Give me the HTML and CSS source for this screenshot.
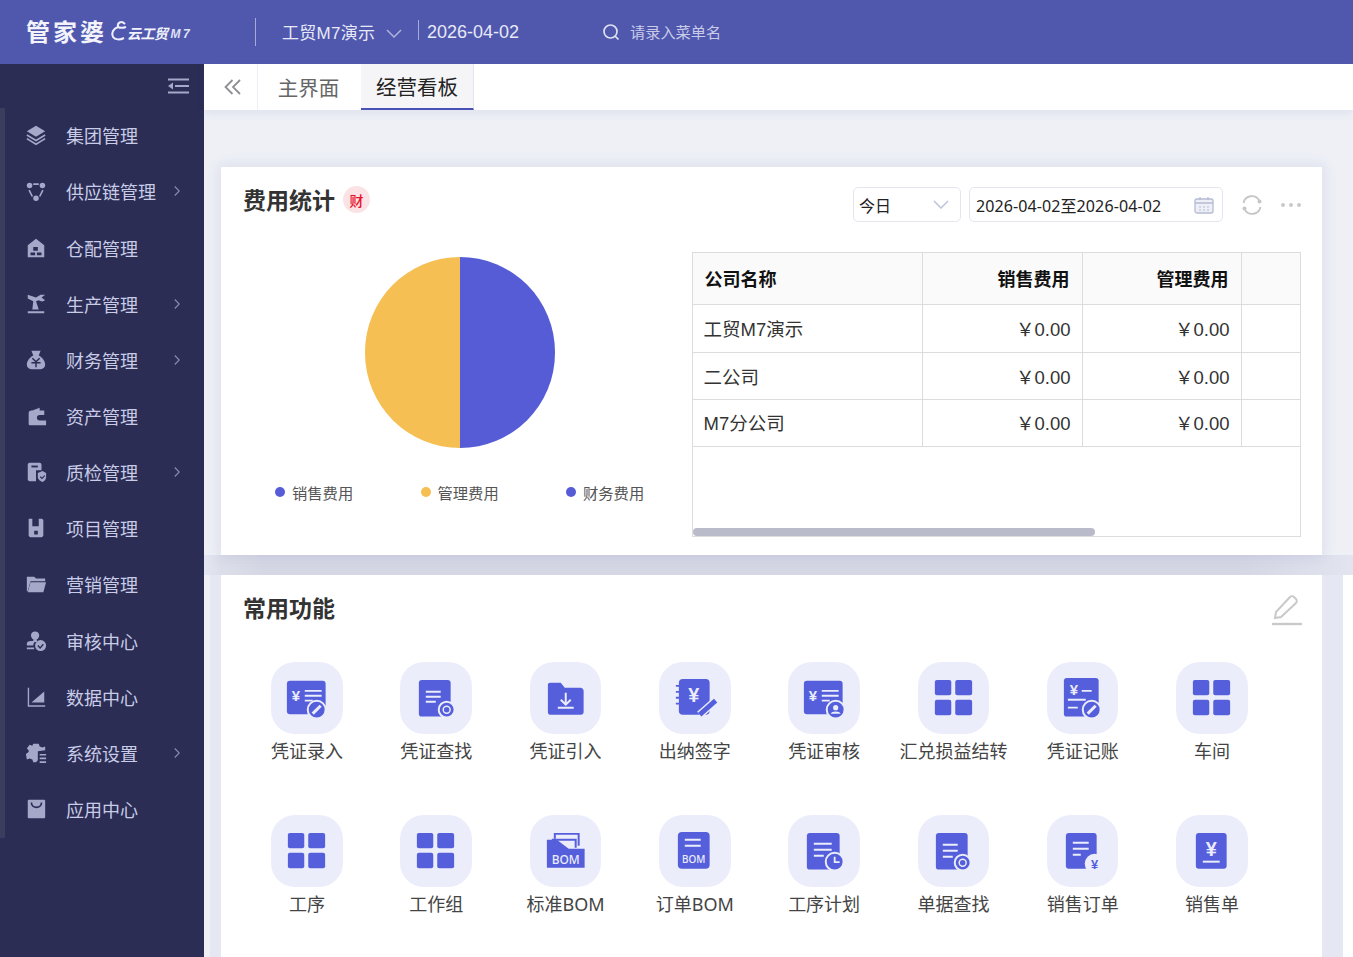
FILE: index.html
```html
<!DOCTYPE html>
<html lang="zh-CN">
<head>
<meta charset="utf-8">
<title>经营看板</title>
<link rel="stylesheet" href="styles.css">
</head>
<body>
<svg class="defs" width="0" height="0">
  <defs>
    <symbol id="t-grid" viewBox="0 0 72 72"><g fill="#565fdb"><rect x="17" y="18" width="16.500" height="15.500" rx="2"/><rect x="37.500" y="18" width="17" height="15.500" rx="2"/><rect x="17" y="38" width="16.500" height="15.500" rx="2"/><rect x="37.500" y="38" width="17" height="15.500" rx="2"/></g></symbol>
    <symbol id="t-voucher" viewBox="0 0 72 72"><rect x="16" y="19" width="39" height="33.500" rx="3" fill="#565fdb"/><text x="25" y="39" class="ty" font-size="15">¥</text><path d="M34 29h17M34 34h17M34 39h8" stroke="#ebedfb" stroke-width="1.800" fill="none"/></symbol>
    <symbol id="t-doc" viewBox="0 0 72 72"><rect x="19" y="18" width="33" height="37" rx="3" fill="#565fdb"/><path d="M26 29h18M26 35h18M26 41h10" stroke="#ebedfb" stroke-width="2" fill="none"/></symbol>
  </defs>
</svg>
<div class="app">
  <header class="topbar">
    <div class="logo">
      <span class="logo-main">管家婆</span>
      <svg class="logo-swirl" width="18" height="24" viewBox="0 0 18 24"><path d="M15 5C11 1 7 4 8 8 3 10 1 14 3 18c2 3 7 3 11 1M8 8c2 1 5 1 8 0" fill="none" stroke="#eef" stroke-width="2"/></svg>
      <span class="logo-sub">云工贸</span>
      <span class="logo-m7">M7</span>
    </div>
    <span class="bar-div tall"></span>
    <span class="company">工贸M7演示</span>
    <svg class="company-arrow" width="16" height="9" viewBox="0 0 16 9"><path d="M1 1l7 7 7-7" fill="none" stroke="#aeb2dc" stroke-width="1.500"/></svg>
    <span class="bar-div short"></span>
    <span class="bar-date">2026-04-02</span>
    <svg class="search-ic" width="18" height="18" viewBox="0 0 18 18"><circle cx="8.500" cy="8.500" r="6.500" fill="none" stroke="#dfe1f3" stroke-width="1.700"/><path d="M13 13l3.500 3.500" stroke="#dfe1f3" stroke-width="1.700"/></svg>
    <span class="search-ph">请录入菜单名</span>
  </header>
  <div class="body">
    <aside class="sidebar">
      <div class="side-toggle">
        <svg width="22" height="16" viewBox="0 0 22 16"><path d="M1 1.500h21M8 8h14M1 14.500h21" stroke="#a5a8c8" stroke-width="2"/><path d="M6 4.500v7L1 8z" fill="#a5a8c8"/></svg>
      </div>
      <nav class="side-list">
        <a class="side-item"><svg class="side-ic" viewBox="0 0 24 24"><path d="M12 2l10 6-10 6L2 8z"/><path d="M2 12l10 6 10-6M2 16l10 6 10-6" fill="none" stroke="#a5a8c8" stroke-width="1.800"/></svg><span>集团管理</span></a>
        <a class="side-item"><svg class="side-ic" viewBox="0 0 24 24"><circle cx="5" cy="6" r="3"/><circle cx="19" cy="6" r="3"/><circle cx="12" cy="20" r="3"/><path d="M9 4.500h6M4.500 11l3.500 7M19.500 11l-3.500 7" stroke="#a5a8c8" stroke-width="1.800" fill="none"/></svg><span>供应链管理</span><svg class="chev" viewBox="0 0 8 14"><path d="M1 1l6 6-6 6"/></svg></a>
        <a class="side-item"><svg class="side-ic" viewBox="0 0 24 24"><path fill-rule="evenodd" d="M12 2l9 7v13H3V9zM9 11h5v4H9zM6 17h5v3H6zM13 17h5v3h-5z"/></svg><span>仓配管理</span></a>
        <a class="side-item"><svg class="side-ic" viewBox="0 0 24 24"><path d="M3 2l9 3 5-3h5l-4 3 4 3c-3 2-5 1-7 0l-3 1 3 9H8l1-9-6-3zM3 20h18v2H3z"/></svg><span>生产管理</span><svg class="chev" viewBox="0 0 8 14"><path d="M1 1l6 6-6 6"/></svg></a>
        <a class="side-item"><svg class="side-ic" viewBox="0 0 24 24"><path d="M7 2h10l-2 5c4 2 7 6 7 10 0 3-2 5-5 5H7c-3 0-5-2-5-5 0-4 3-8 7-10z"/><path d="M8 10l4 4 4-4M7 15h10M12 14v6" stroke="#2b2d55" stroke-width="1.600" fill="none"/></svg><span>财务管理</span><svg class="chev" viewBox="0 0 8 14"><path d="M1 1l6 6-6 6"/></svg></a>
        <a class="side-item"><svg class="side-ic" viewBox="0 0 24 24"><path d="M16 3v3H8zM4 9c0-2 1-3 3-3h14v5h-5a3 3 0 000 6h7v5H5c-1 0-1-1-1-2z"/></svg><span>资产管理</span></a>
        <a class="side-item"><svg class="side-ic" viewBox="0 0 24 24"><path d="M5 2h11c1 0 2 1 2 2v6h-6v12H5c-1 0-2-1-2-2V4c0-1 1-2 2-2z"/><path d="M7 6h7" stroke="#2b2d55" stroke-width="2"/><path d="M14 13l5-2 4 2v5c0 2-2 4-4 5-2-1-5-3-5-5z"/><path d="M16.500 17l2 2 3-3" stroke="#2b2d55" stroke-width="1.300" fill="none"/></svg><span>质检管理</span><svg class="chev" viewBox="0 0 8 14"><path d="M1 1l6 6-6 6"/></svg></a>
        <a class="side-item"><svg class="side-ic" viewBox="0 0 24 24"><path fill-rule="evenodd" d="M5 2h3v8h7V2h3c1 0 2 1 2 2v16c0 1-1 2-2 2H6c-1 0-2-1-2-2V3c0-1 0-1 1-1zM10 15h4v4h-4z"/></svg><span>项目管理</span></a>
        <a class="side-item"><svg class="side-ic" viewBox="0 0 24 24"><path d="M2 4h8l2 2h10v3H6L3 20H2z"/><path d="M6 10h17l-3 11H3z"/></svg><span>营销管理</span></a>
        <a class="side-item"><svg class="side-ic" viewBox="0 0 24 24"><circle cx="11" cy="6" r="4.500"/><path d="M9 10h4v3H9zM2 15c0-2 2-3 4-3h6c-2 1-3 3-3 5H2zM2 19h8v2H2z"/><circle cx="17" cy="17" r="6"/><path d="M14 17l2.500 2.500 3.500-4" stroke="#2b2d55" stroke-width="1.500" fill="none"/></svg><span>审核中心</span></a>
        <a class="side-item"><svg class="side-ic" viewBox="0 0 24 24"><path d="M3 2h1.500v19H22v1.500H3z"/><path d="M7 18L21 6v12z"/></svg><span>数据中心</span></a>
        <a class="side-item"><svg class="side-ic" viewBox="0 0 24 24"><path d="M9 2h6l1 3 3 1 3-1v4l-8 1v10l-2 2H9l-1-3-3-1-3 1-1-6 3-2V9L2 7l3-4 3 1z"/><path d="M16 13h7v1.800h-7zM16 17h7v1.800h-7zM16 21h7v1.800h-7z"/></svg><span>系统设置</span><svg class="chev" viewBox="0 0 8 14"><path d="M1 1l6 6-6 6"/></svg></a>
        <a class="side-item"><svg class="side-ic" viewBox="0 0 24 24"><path d="M4 2h17c1 0 1 1 1 1v18c0 1-1 1-1 1H4c-1 0-1-1-1-1V3s0-1 1-1z"/><path d="M7 5c0 7 11 7 11 0" fill="none" stroke="#2b2d55" stroke-width="1.800"/></svg><span>应用中心</span></a>
      </nav>
    </aside>
    <main class="main">
      <div class="tabs">
        <div class="tab-back"><svg width="18" height="16" viewBox="0 0 18 16"><path d="M8.500 1l-7 7 7 7M16 1L9 8l7 7" fill="none" stroke="#8e8e94" stroke-width="1.800"/></svg></div>
        <div class="tab">主界面</div>
        <div class="tab active">经营看板</div>
      </div>
      <section class="upper">
        <div class="card stats">
          <div class="stats-head">
            <h2 class="card-title">费用统计</h2>
            <span class="badge">财</span>
            <div class="head-tools">
              <div class="field sel"><span>今日</span><svg width="16" height="9" viewBox="0 0 16 9"><path d="M1 1l7 7 7-7" fill="none" stroke="#bfc3da" stroke-width="1.500"/></svg></div>
              <div class="field dater"><span>2026-04-02至2026-04-02</span><svg width="20" height="18" viewBox="0 0 20 18"><rect x="1" y="3" width="18" height="14" rx="2" fill="#eef0f8" stroke="#b5bad3" stroke-width="1.300"/><path d="M1 7h18M6 1v3M14 1v3" stroke="#b5bad3" stroke-width="1.300"/><path d="M5 11h2M9 11h2M13 11h2M5 14h2M9 14h2M13 14h2" stroke="#b5bad3"/></svg></div>
              <svg class="refresh" width="22" height="22" viewBox="0 0 22 22"><path d="M2.500 9A8.500 8.500 0 0118 6M19.500 13A8.500 8.500 0 014 16" fill="none" stroke="#c6c6c8" stroke-width="1.800"/><circle cx="18.500" cy="7.500" r="2" fill="#c6c6c8"/><circle cx="3.500" cy="14.500" r="2" fill="#c6c6c8"/></svg>
              <span class="more"><i></i><i></i><i></i></span>
            </div>
          </div>
          <div class="stats-body">
            <div class="chart">
              <div class="pie"></div>
              <div class="legend">
                <span class="leg"><i class="dot blue"></i>销售费用</span>
                <span class="leg"><i class="dot gold"></i>管理费用</span>
                <span class="leg"><i class="dot blue"></i>财务费用</span>
              </div>
            </div>
            <div class="table-box">
              <table class="grid-table">
                <colgroup><col class="c1"><col class="c2"><col class="c3"><col class="c4"></colgroup>
                <thead><tr><th class="left">公司名称</th><th>销售费用</th><th>管理费用</th><th></th></tr></thead>
                <tbody>
                  <tr class="r1"><td class="left">工贸M7演示</td><td>￥0.00</td><td>￥0.00</td><td></td></tr>
                  <tr class="r2"><td class="left">二公司</td><td>￥0.00</td><td>￥0.00</td><td></td></tr>
                  <tr class="r3"><td class="left">M7分公司</td><td>￥0.00</td><td>￥0.00</td><td></td></tr>
                </tbody>
              </table>
              <div class="scroll-track"><div class="scroll-thumb"></div></div>
            </div>
          </div>
        </div>
      </section>
      <section class="lower">
        <div class="card funcs">
          <div class="funcs-head">
            <h2 class="card-title">常用功能</h2>
            <svg class="edit-ic" width="32" height="32" viewBox="0 0 32 32"><path d="M4 24l1-6L19 3c1-1 3-1 4 0l2 2c1 1 1 3 0 4L10 23z" fill="none" stroke="#c9c9cb" stroke-width="2"/><path d="M1 30h30" stroke="#c9c9cb" stroke-width="2.400"/></svg>
          </div>
          <div class="func-grid">
            <div class="func"><span class="tile"><svg viewBox="0 0 72 72"><use href="#t-voucher"/><circle cx="46" cy="48" r="9" fill="#565fdb" stroke="#ebedfb" stroke-width="2"/><path d="M42 52l8-8" stroke="#ebedfb" stroke-width="3"/></svg></span><span class="func-name">凭证录入</span></div>
            <div class="func"><span class="tile"><svg viewBox="0 0 72 72"><rect x="19" y="18" width="32" height="37" rx="3" fill="#565fdb"/><path d="M26 30h15M26 35h15M26 40h10" stroke="#ebedfb" stroke-width="2" fill="none"/><circle cx="47" cy="48" r="8" fill="#565fdb" stroke="#ebedfb" stroke-width="2"/><circle cx="47" cy="48" r="3.500" fill="none" stroke="#ebedfb" stroke-width="1.500"/></svg></span><span class="func-name">凭证查找</span></div>
            <div class="func"><span class="tile"><svg viewBox="0 0 72 72"><path d="M18 23c0-1 1-2 2-2h11l4 5h16c1 0 3 1 3 3v21c0 2-1 3-3 3H20c-1 0-2-1-2-3z" fill="#565fdb"/><path d="M36 31v11M31 38l5 5 5-5M28 46h16" stroke="#ebedfb" stroke-width="2" fill="none"/></svg></span><span class="func-name">凭证引入</span></div>
            <div class="func"><span class="tile"><svg viewBox="0 0 72 72"><rect x="20" y="17" width="31" height="36" rx="4" fill="#565fdb"/><path d="M17 24h5M17 30h5M17 36h5M17 42h5" stroke="#565fdb" stroke-width="1.800"/><text x="35" y="40" class="ty" font-size="20">¥</text><path d="M41 53l16-14" stroke="#ebedfb" stroke-width="8"/><path d="M41 53l16-14" stroke="#565fdb" stroke-width="5"/></svg></span><span class="func-name">出纳签字</span></div>
            <div class="func"><span class="tile"><svg viewBox="0 0 72 72"><use href="#t-voucher"/><circle cx="48" cy="48" r="9" fill="#565fdb" stroke="#ebedfb" stroke-width="2"/><circle cx="48" cy="46" r="2.600" fill="#ebedfb"/><path d="M43 52c1-3 9-3 10 0z" fill="#ebedfb"/></svg></span><span class="func-name">凭证审核</span></div>
            <div class="func"><span class="tile"><svg viewBox="0 0 72 72"><use href="#t-grid"/></svg></span><span class="func-name">汇兑损益结转</span></div>
            <div class="func"><span class="tile"><svg viewBox="0 0 72 72"><rect x="17" y="16" width="35" height="39" rx="3" fill="#565fdb"/><text x="27" y="33" class="ty" font-size="15">¥</text><path d="M35 29h10M21 38h18M21 46h10" stroke="#ebedfb" stroke-width="1.800"/><circle cx="45" cy="48" r="9" fill="#565fdb" stroke="#ebedfb" stroke-width="2"/><path d="M41 52l8-8" stroke="#ebedfb" stroke-width="3"/></svg></span><span class="func-name">凭证记账</span></div>
            <div class="func"><span class="tile"><svg viewBox="0 0 72 72"><use href="#t-grid"/></svg></span><span class="func-name">车间</span></div>
            <div class="func"><span class="tile"><svg viewBox="0 0 72 72"><use href="#t-grid"/></svg></span><span class="func-name">工序</span></div>
            <div class="func"><span class="tile"><svg viewBox="0 0 72 72"><use href="#t-grid"/></svg></span><span class="func-name">工作组</span></div>
            <div class="func"><span class="tile"><svg viewBox="0 0 72 72"><path d="M25 24v-5h24v12" fill="none" stroke="#565fdb" stroke-width="2"/><path d="M22 25h24v8" fill="#ebedfb" stroke="#565fdb" stroke-width="2"/><path d="M17 25h10l12 9h16v19H17z" fill="#565fdb"/><text x="36" y="49" class="tb" font-size="12">BOM</text></svg></span><span class="func-name">标准BOM</span></div>
            <div class="func"><span class="tile"><svg viewBox="0 0 72 72"><rect x="19" y="17" width="32" height="37" rx="4" fill="#565fdb"/><path d="M26 25h16M26 31h16" stroke="#ebedfb" stroke-width="2"/><text x="35" y="48" class="tb" font-size="10">BOM</text></svg></span><span class="func-name">订单BOM</span></div>
            <div class="func"><span class="tile"><svg viewBox="0 0 72 72"><use href="#t-doc"/><circle cx="47" cy="47" r="9" fill="#565fdb" stroke="#ebedfb" stroke-width="2"/><path d="M47 42v5.500h5" fill="none" stroke="#ebedfb" stroke-width="1.800"/></svg></span><span class="func-name">工序计划</span></div>
            <div class="func"><span class="tile"><svg viewBox="0 0 72 72"><rect x="18" y="18" width="32" height="37" rx="3" fill="#565fdb"/><path d="M25 30h15M25 36h15M25 42h10" stroke="#ebedfb" stroke-width="2" fill="none"/><circle cx="45" cy="48" r="8" fill="#565fdb" stroke="#ebedfb" stroke-width="2"/><circle cx="45" cy="48" r="3.500" fill="none" stroke="#ebedfb" stroke-width="1.500"/></svg></span><span class="func-name">单据查找</span></div>
            <div class="func"><span class="tile"><svg viewBox="0 0 72 72"><rect x="19" y="18" width="31" height="36" rx="3" fill="#565fdb"/><path d="M26 28h16M26 34h16M26 40h8" stroke="#ebedfb" stroke-width="2"/><circle cx="48" cy="49" r="10" fill="#ebedfb"/><text x="48" y="54" class="ty2" font-size="13">¥</text></svg></span><span class="func-name">销售订单</span></div>
            <div class="func"><span class="tile"><svg viewBox="0 0 72 72"><rect x="20" y="18" width="31" height="36" rx="3" fill="#565fdb"/><text x="35.500" y="41" class="ty" font-size="20">¥</text><path d="M27 47h17" stroke="#ebedfb" stroke-width="2"/></svg></span><span class="func-name">销售单</span></div>
          </div>
        </div>
      </section>
    </main>
  </div>
</div>
</body>
</html>
```
FILE: styles.css
```css
* { box-sizing: border-box; }
html, body { margin: 0; padding: 0; height: 957px; overflow: hidden; }
body { font-family: "Noto Sans CJK SC", "Noto Sans", sans-serif; color: #333; background: #fff; }
.defs { position: absolute; }
.ty { fill: #ebedfb; font-family: "Liberation Sans", sans-serif; font-weight: 700; text-anchor: middle; }
.ty2 { fill: #565fdb; font-family: "Liberation Sans", sans-serif; font-weight: 700; text-anchor: middle; }
.tb { fill: #ebedfb; font-family: "Noto Sans", sans-serif; font-weight: 500; text-anchor: middle; }

.app { display: flex; flex-direction: column; height: 957px; overflow: hidden; }

.topbar { height: 64px; flex: none; display: flex; align-items: center; background: #5058ae; color: #e8e9f6; font-size: 17px; padding: 0 0 1px 26px; }
.logo { width: 229px; flex: none; display: flex; align-items: center; color: #f2f3fb; margin-top: -1px; }
.logo-main { font-size: 24px; font-weight: 700; letter-spacing: 3px; line-height: 32px; }
.logo-swirl { margin-left: 3px; }
.logo-sub { font-size: 14px; font-weight: 700; font-style: italic; margin: 4px 0 0 -1px; letter-spacing: -0.500px; }
.logo-m7 { font-family: "Liberation Sans", sans-serif; font-size: 12px; font-weight: 700; font-style: italic; letter-spacing: 2.500px; margin: 6px 0 0 3px; color: #dfe1f3; }
.bar-div { width: 1px; flex: none; background: #a8abd8; }
.bar-div.tall { height: 28px; margin-right: 26px; }
.bar-div.short { height: 20px; margin: -4px 8px 0 16px; }
.company { width: 93px; flex: none; white-space: nowrap; font-family: "Liberation Sans", "Noto Sans CJK SC", sans-serif; letter-spacing: 0.300px; margin-top: -1px; }
.company-arrow { margin-left: 11px; margin-top: 3px; flex: none; }
.bar-date { font-family: "Liberation Sans", sans-serif; font-size: 18px; width: 92px; flex: none; white-space: nowrap; margin-top: 1px; }
.search-ic { margin-left: 83px; flex: none; }
.search-ph { margin: -2px 0 0 10px; font-size: 15.200px; color: #c9cbe8; }

.body { flex: 1; display: flex; min-height: 0; }

.sidebar { width: 204px; flex: none; background: #2b2d55; color: #c9cce6; }
.side-toggle { height: 44px; display: flex; justify-content: flex-end; align-items: center; padding: 0 15px 0 0; }
.side-list { border-left: 5px solid #3a3d5e; height: 730px; display: flex; flex-direction: column; }
.side-item { height: 56.150px; flex: none; display: flex; align-items: center; padding: 0 0 1.500px 20px; font-size: 18px; }
.side-ic { width: 22px; height: 22px; fill: #a5a8c8; flex: none; margin-right: 19px; }
.chev { width: 6px; height: 12px; fill: none; stroke: #8b8eb0; stroke-width: 1.500; margin-left: auto; margin-right: 24px; }

.main { flex: 1; min-width: 0; display: flex; flex-direction: column; background: #fff; }

.tabs { height: 46px; flex: none; display: flex; background: #fff; font-size: 20.500px; color: #666; position: relative; z-index: 1; box-shadow: 0 3px 8px rgba(90, 100, 170, 0.10); }
.tab-back { width: 54px; display: flex; align-items: center; justify-content: center; border-right: 1px solid #eceef5; padding-left: 4px; }
.tab { width: 103px; display: flex; align-items: center; justify-content: center; padding-right: 2px; }
.tab.active { width: 113px; background: #f5f5f7; color: #222; border-bottom: 2px solid #4a52b8; border-right: 1px solid #e3e4ee; padding-right: 0; }

.upper { height: 465px; flex: none; padding: 57px 31px 0 17px; background: linear-gradient(90deg, #e4e6f1 0, #dcdee9 17px, #d5d7e4 60px, #d5d7e4 1040px, #e2e4f0 100%) left bottom / 100% 20px no-repeat, #eef0f6; }
.lower { flex: 1; min-height: 0; margin-right: 10px; background: linear-gradient(90deg, #eef0f6 6px, #e5e8f2 6px); padding: 0 21px 0 17px; overflow: hidden; }

.card { background: #fff; }
.stats { box-shadow: 0 0 12px 2px rgba(90, 100, 170, 0.13); }
.card-title { margin: 0; font-size: 23px; font-weight: 700; color: #333; line-height: 32px; }

.stats { height: 388px; padding: 16px 21px 0 22px; }
.stats-head { display: flex; align-items: flex-start; height: 69px; }
.badge { width: 27px; height: 27px; margin: 3px 0 0 8px; border-radius: 50%; background: #fbe3e5; color: #e8112d; font-size: 14px; font-weight: 500; display: flex; align-items: center; justify-content: center; }
.head-tools { margin-left: auto; display: flex; align-items: center; height: 35px; margin-top: 4px; }
.field { height: 35px; border: 1px solid #e4e6ef; border-radius: 5px; display: flex; align-items: center; justify-content: space-between; font-size: 16px; color: #222; }
.sel { width: 108px; padding: 0 11px 0 5px; }
.dater { width: 254px; margin-left: 8px; padding: 0 8px 0 6px; font-family: "Noto Sans", "Noto Sans CJK SC", sans-serif; letter-spacing: 0.100px; }
.refresh { margin-left: 18px; flex: none; }
.more { display: flex; gap: 4px; margin-left: 18px; }
.more i { width: 4px; height: 4px; border-radius: 50%; background: #c9c9cb; }

.stats-body { display: flex; }
.chart { width: 449px; flex: none; display: flex; flex-direction: column; align-items: flex-start; }
.pie { width: 190.500px; height: 190.500px; margin: 5px 0 0 121.500px; border-radius: 50%; background: linear-gradient(90deg, #f5bf54 50%, #565cd6 50%); }
.legend { display: flex; margin: 33.500px 0 0 32px; gap: 67px; font-size: 15.300px; color: #555; }
.leg { display: flex; align-items: center; gap: 7px; width: 78.500px; white-space: nowrap; }
.dot { width: 10px; height: 10px; border-radius: 50%; flex: none; }
.dot.blue { background: #565cd6; }
.dot.gold { background: #f5bf54; }

.table-box { width: 609px; height: 285px; border: 1px solid #dcdcdc; display: flex; flex-direction: column; justify-content: space-between; overflow: hidden; }
.grid-table { width: 608px; border-collapse: collapse; table-layout: fixed; font-size: 18px; color: #333; }
.c1 { width: 229.500px; }
.c2 { width: 160px; }
.c3 { width: 159px; }
.grid-table th, .grid-table td { border: 1px solid #dcdcdc; text-align: right; padding: 0 11.500px 1px; }
.grid-table .r2 td { padding-top: 1px; padding-bottom: 0; }
.grid-table th { padding: 0 12.500px 0; }
.grid-table th.left { padding-left: 11.500px; }
.grid-table td.left { padding-left: 10.500px; }
.grid-table tr > :first-child { border-left: 0; }
.grid-table tr > :last-child { border-right: 0; }
.grid-table thead tr > * { border-top: 0; }
.grid-table th { height: 51px; background: #fafafa; font-weight: 700; color: #111; font-size: 18px; }
.grid-table .left { text-align: left; }
.grid-table td { font-family: "Liberation Sans", "Noto Sans CJK SC", sans-serif; font-size: 18.500px; }
.r1 td { height: 48px; }
.r2 td, .r3 td { height: 47px; }
.scroll-track { height: 9px; padding-top: 1px; }
.scroll-thumb { width: 402px; height: 8px; border-radius: 4px; background: #b9bbcb; }

.funcs { height: 400px; padding: 16px 19px 0 21px; }
.funcs-head { display: flex; justify-content: space-between; align-items: flex-start; height: 71px; }
.funcs-head .card-title { margin-left: 1px; }
.edit-ic { margin-top: 3px; }
.func-grid { display: grid; grid-template-columns: repeat(8, 129.300px); grid-auto-rows: 153px; width: 1035px; padding-left: 0.300px; }
.func { display: flex; flex-direction: column; align-items: center; }
.tile { width: 71.500px; height: 71.500px; border-radius: 24px; background: #ebedfb; display: block; }
.tile svg { width: 71.500px; height: 71.500px; display: block; }
.func-name { font-family: "Noto Sans", "Noto Sans CJK SC", sans-serif; font-size: 18px; color: #444; line-height: 26px; margin-top: 4.500px; white-space: nowrap; }
```
